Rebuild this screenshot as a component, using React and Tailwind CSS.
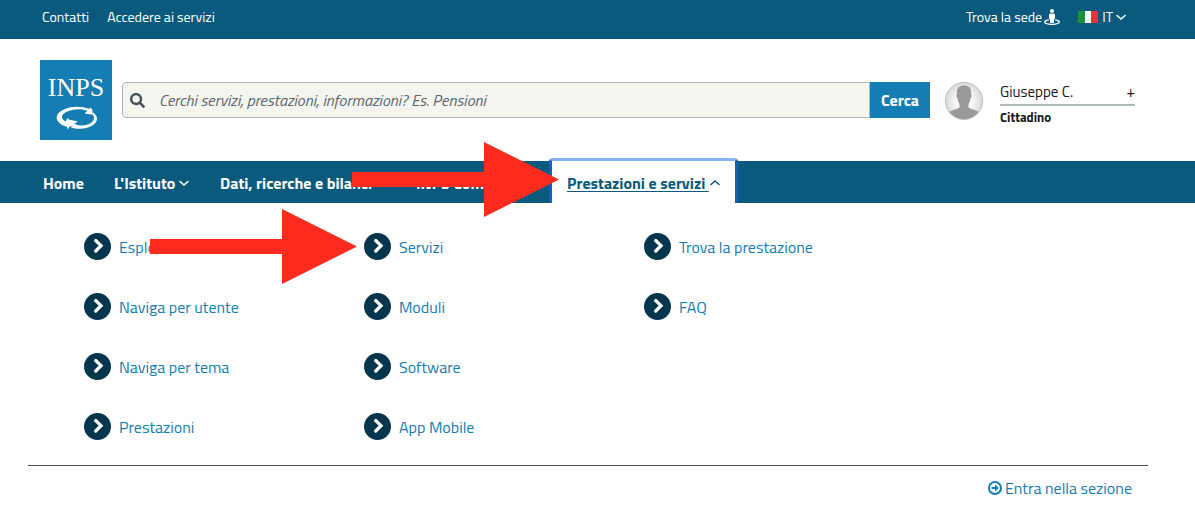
import { FaSearch, FaStreetView } from 'react-icons/fa';

const NAV_ITEMS = [
  { label: 'Home', width: 'w-[71px]', hasMenu: false },
  { label: "L'Istituto", width: 'w-[106px]', hasMenu: true },
  { label: 'Dati, ricerche e bilanci', width: 'w-[196px]', hasMenu: true },
  { label: 'INPS Comunica', width: 'w-[148px]', hasMenu: true },
];

const MENU_COLUMNS = [
  ['Esplora Prestazioni', 'Naviga per utente', 'Naviga per tema', 'Prestazioni'],
  ['Servizi', 'Moduli', 'Software', 'App Mobile'],
  ['Trova la prestazione', 'FAQ'],
];

function Logo() {
  return (
    <svg viewBox="0 0 72 80" className="w-[72px] h-20 shrink-0" role="img" aria-label="INPS">
      <rect width="72" height="80" fill="#147db3" />
      <text x="36" y="36" textAnchor="middle" fill="#fff" fontFamily="'Liberation Serif', serif" fontSize="26">
        INPS
      </text>
      {/* rotating arrows */}
      <path
        d="M53 50.500L50 47.200L49.300 49C42 46 32 46 25 49C17 52.500 14.500 57 18.500 62C20.500 64.500 23.500 66 27 66.800L27.500 69.500L29.500 66.500L38.500 66L34.500 63.500L38 61.500L28.500 59.500L28 57.800L25.500 61.500C20 58.500 21 54 27.500 51.500C34 48.800 42 48.500 47.500 51L44.500 53.500L53.500 54.800L52 51Z"
        fill="#fff"
      />
      <path
        d="M53 52.500C58.500 56 58.500 62 52 65.800C46 69.300 37 69.500 30.500 67.200L36.500 65C43 66.300 49.500 64.800 52.500 61.500C54.500 59 54.500 57 53 55Z"
        fill="#fff"
      />
    </svg>
  );
}

function Avatar() {
  return (
    <svg viewBox="0 0 38 38" className="w-[38px] h-[38px] shrink-0" aria-hidden="true">
      <defs>
        <clipPath id="avatar-clip">
          <circle cx="19" cy="19" r="18" />
        </clipPath>
        <radialGradient id="avatar-bg">
          <stop offset="0.4" stopColor="#fafafa" />
          <stop offset="1" stopColor="#d9dbdb" />
        </radialGradient>
      </defs>
      <circle cx="19" cy="19" r="18.500" fill="url(#avatar-bg)" stroke="#b2bdbf" />
      <path
        clipPath="url(#avatar-clip)"
        d="M12 12C11.500 6 14 3.500 19 3.500C24 3.500 26.500 6 26 12C27 12.500 26.500 16 25.500 16.500C25 19.500 24.500 21 23.500 22V25.500C26 27.500 31 28 34 30L34 38H4V30C7 28 12 27.500 14.500 25.500V22C13.500 21 13 19.500 12.500 16.500C11.500 16 11 12.500 12 12Z"
        fill="#999"
      />
    </svg>
  );
}

function Flag() {
  return (
    <svg viewBox="0 0 20 12" className="w-5 h-3" aria-hidden="true">
      <rect width="7" height="12" fill="#1f8f3f" />
      <rect x="7" width="6" height="12" fill="#fff" />
      <rect x="13" width="7" height="12" fill="#e8323a" />
    </svg>
  );
}

function Caret({ up = false }) {
  return (
    <svg viewBox="0 0 12 12" className="w-3 h-3 shrink-0" aria-hidden="true">
      <path
        d={up ? 'M2 7.500L6 4L10 7.500' : 'M2 4.500L6 8L10 4.500'}
        fill="none"
        stroke="currentColor"
        strokeWidth="1.600"
        strokeLinecap="round"
      />
    </svg>
  );
}

function CircleChevron() {
  return (
    <svg viewBox="0 0 27 27" className="w-[27px] h-[27px] shrink-0" aria-hidden="true">
      <circle cx="13.500" cy="13.500" r="13.500" fill="#06364d" />
      <path d="M11.700 7.500L17 12.700L11.700 18" fill="none" stroke="#fff" strokeWidth="3.200" strokeLinecap="round" />
    </svg>
  );
}

function CircleArrow() {
  return (
    <svg viewBox="0 0 14 14" className="w-[14px] h-[14px]" aria-hidden="true">
      <circle cx="7" cy="7" r="6" fill="none" stroke="currentColor" strokeWidth="2" />
      <path d="M3.500 6H7V3.500L10.800 7L7 10.500V8H3.500Z" fill="currentColor" />
    </svg>
  );
}

// Red pointer laid over the page to highlight a step
function RedArrow({ className }) {
  return (
    <svg viewBox="0 0 207 75" className={`absolute z-10 w-[207px] h-[75px] pointer-events-none ${className}`} aria-hidden="true">
      <path d="M0 30H132V0L207 37.500L132 75V45H0Z" fill="#fe2b1e" />
    </svg>
  );
}

function TopBar() {
  return (
    <div className="h-[39px] pl-[42px] pr-[68px] flex items-center justify-between bg-[#0a5a7e] text-white text-sm pb-[6px]">
      <div className="flex gap-[18px]">
        <a href="#contatti">Contatti</a>
        <a href="#accedere">Accedere ai servizi</a>
      </div>
      <div className="flex items-center gap-[18px]">
        <a href="#sede" className="flex items-center gap-[2px]">
          Trova la sede
          <FaStreetView size={16} />
        </a>
        <button type="button" className="flex items-center gap-1">
          <Flag />
          <span className="flex items-center gap-[2px]">
            IT
            <Caret />
          </span>
        </button>
      </div>
    </div>
  );
}

function Header() {
  return (
    <header className="h-[122px] pl-10 pr-[60px] flex items-center">
      <Logo />
      <form className="ml-[10px] h-9 flex flex-1" onSubmit={(e) => e.preventDefault()}>
        <div className="flex flex-1 items-center bg-[#f4f5ee] border border-[#aeb9bc] rounded-l-sm pl-[7px]">
          <FaSearch size={15} className="text-[#435059]" />
          <input
            type="text"
            aria-label="Cerca nel sito"
            placeholder="Cerchi servizi, prestazioni, informazioni? Es. Pensioni"
            className="flex-1 ml-[14px] h-full bg-transparent italic text-base text-[#5b6770] placeholder:text-[#5b6770] outline-none"
          />
        </div>
        <button type="submit" className="w-[60px] bg-[#147db3] text-white text-base font-bold">
          Cerca
        </button>
      </form>
      <div className="ml-[15px] pt-px flex items-start">
        <Avatar />
        <div className="ml-[17px] w-[135px] h-[38px] text-[#17191c]">
          <button type="button" className="w-full h-6 flex items-center justify-between border-b-2 border-[#aeb9bc] text-[15px]">
            <span>Giuseppe C.</span>
            <span>+</span>
          </button>
          <div className="pt-px text-[13px] leading-5 font-bold">Cittadino</div>
        </div>
      </div>
    </header>
  );
}

function Nav() {
  return (
    <nav className="relative h-[42px] pl-7 flex items-end bg-[#0a5a7e] text-white text-base font-bold whitespace-nowrap">
      {NAV_ITEMS.map((item) => (
        <button key={item.label} type="button" className={`${item.width} h-[42px] pl-[15px] pt-[2px] flex items-center gap-[3px]`}>
          {item.label}
          {item.hasMenu && <Caret />}
        </button>
      ))}
      <button
        type="button"
        aria-expanded="true"
        className="h-[45px] w-[189px] pl-[15px] pt-[2px] flex items-center rounded-t-sm border-x-3 border-t-3 border-x-[#1262ba] border-t-[#86b2f8] bg-white text-[#0a5a7e]"
      >
        <span className="underline underline-offset-2">Prestazioni e servizi&nbsp;</span>
        <Caret up />
      </button>
      <RedArrow className="left-[352px] -top-[19px]" />
    </nav>
  );
}

function MegaMenu() {
  return (
    <section className="relative pl-7 pr-[47px] text-[#147db3] text-base">
      <div className="grid grid-cols-4 pt-[13px] pb-[9px]">
        {MENU_COLUMNS.map((links) => (
          <ul key={links[0]} className="pl-14">
            {links.map((label) => (
              <li key={label} className="h-15 flex items-center">
                <a href="#menu" className="flex items-center gap-2">
                  <CircleChevron />
                  <span className="pt-[2px]">{label}</span>
                </a>
              </li>
            ))}
          </ul>
        ))}
      </div>
      <div className="border-t border-[#435059] pt-[10px] pr-4 flex justify-end">
        <a href="#sezione" className="flex items-center gap-[3px]">
          <CircleArrow />
          Entra nella sezione
        </a>
      </div>
      <RedArrow className="left-[150px] top-[6px]" />
    </section>
  );
}

export default function App() {
  return (
    <div className="min-h-screen bg-white font-['Titillium_Web','Open_Sans',sans-serif]">
      <TopBar />
      <Header />
      <Nav />
      <MegaMenu />
    </div>
  );
}
